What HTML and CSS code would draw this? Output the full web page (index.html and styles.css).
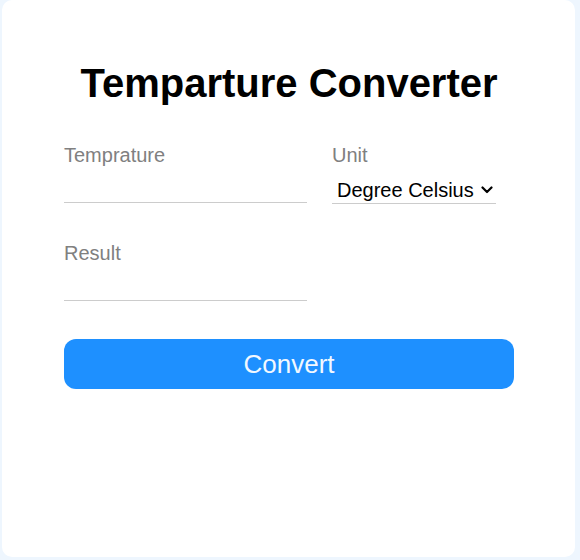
FILE: index.html
```html
<!DOCTYPE html>
<html>
<head>
<meta charset="utf-8">
<link rel="stylesheet" href="styles.css">
</head>
<body>
<div class="card">
  <h1 class="title">Temparture Converter</h1>
  <div class="grid">
    <div class="field">
      <label class="label" for="temp">Temprature</label>
      <input class="input" id="temp" type="text">
    </div>
    <div class="field">
      <label class="label" for="unit">Unit</label>
      <div class="select-wrap">
        <select class="select" id="unit">
          <option>Degree Celsius</option>
          <option>Fahrenheit</option>
        </select>
        <svg class="chevron" width="12" height="8" viewBox="0 0 12 8" aria-hidden="true">
          <path d="M1.5 1.5 L6 6 L10.5 1.5" fill="none" stroke="#000" stroke-width="2.2" stroke-linecap="round" stroke-linejoin="round"/>
        </svg>
      </div>
    </div>
    <div class="field">
      <label class="label" for="result">Result</label>
      <input class="input" id="result" type="text">
    </div>
  </div>
  <button class="btn" type="button">Convert</button>
</div>
</body>
</html>
```
FILE: styles.css
```css
html, body {
  margin: 0;
  padding: 0;
}
body {
  background: #eef6fe;
  font-family: "Liberation Sans", Arial, sans-serif;
  width: 580px;
  height: 560px;
  overflow: hidden;
}
.card {
  box-sizing: border-box;
  margin: 0 5px 0 2px;
  height: 557px;
  background: #ffffff;
  border-radius: 10px;
  padding: 60px 61px 0 62px;
}
.title {
  margin: 0;
  font-size: 40px;
  font-weight: bold;
  text-align: center;
  color: #000;
  line-height: 46px;
}
.grid {
  margin-top: 38px;
  display: grid;
  grid-template-columns: 243px 1fr;
  column-gap: 25px;
  row-gap: 38px;
}
.field {
  display: flex;
  flex-direction: column;
  align-items: flex-start;
}
.label {
  font-size: 20px;
  line-height: 23px;
  color: #808080;
}
.input {
  box-sizing: border-box;
  width: 243px;
  height: 36px;
  border: none;
  border-bottom: 1px solid #cccccc;
  outline: none;
  font-family: inherit;
  font-size: 20px;
  padding: 0 4px;
  background: transparent;
}
.select-wrap {
  position: relative;
  margin-top: 10px;
  width: 164px;
}
.select {
  box-sizing: border-box;
  display: block;
  width: 164px;
  height: 27px;
  border: none;
  border-bottom: 1px solid #cccccc;
  border-radius: 0;
  background: #fff;
  font-family: inherit;
  font-size: 20px;
  color: #000;
  padding: 0 20px 0 5px;
  outline: none;
  -webkit-appearance: none;
  appearance: none;
}
.chevron {
  position: absolute;
  left: 149px;
  top: 9px;
  pointer-events: none;
}
.btn {
  display: block;
  margin-top: 38px;
  width: 450px;
  height: 50px;
  border: none;
  border-radius: 12px;
  background: #1e90ff;
  color: #f2f8ff;
  font-family: inherit;
  font-size: 26px;
  cursor: pointer;
}
```
